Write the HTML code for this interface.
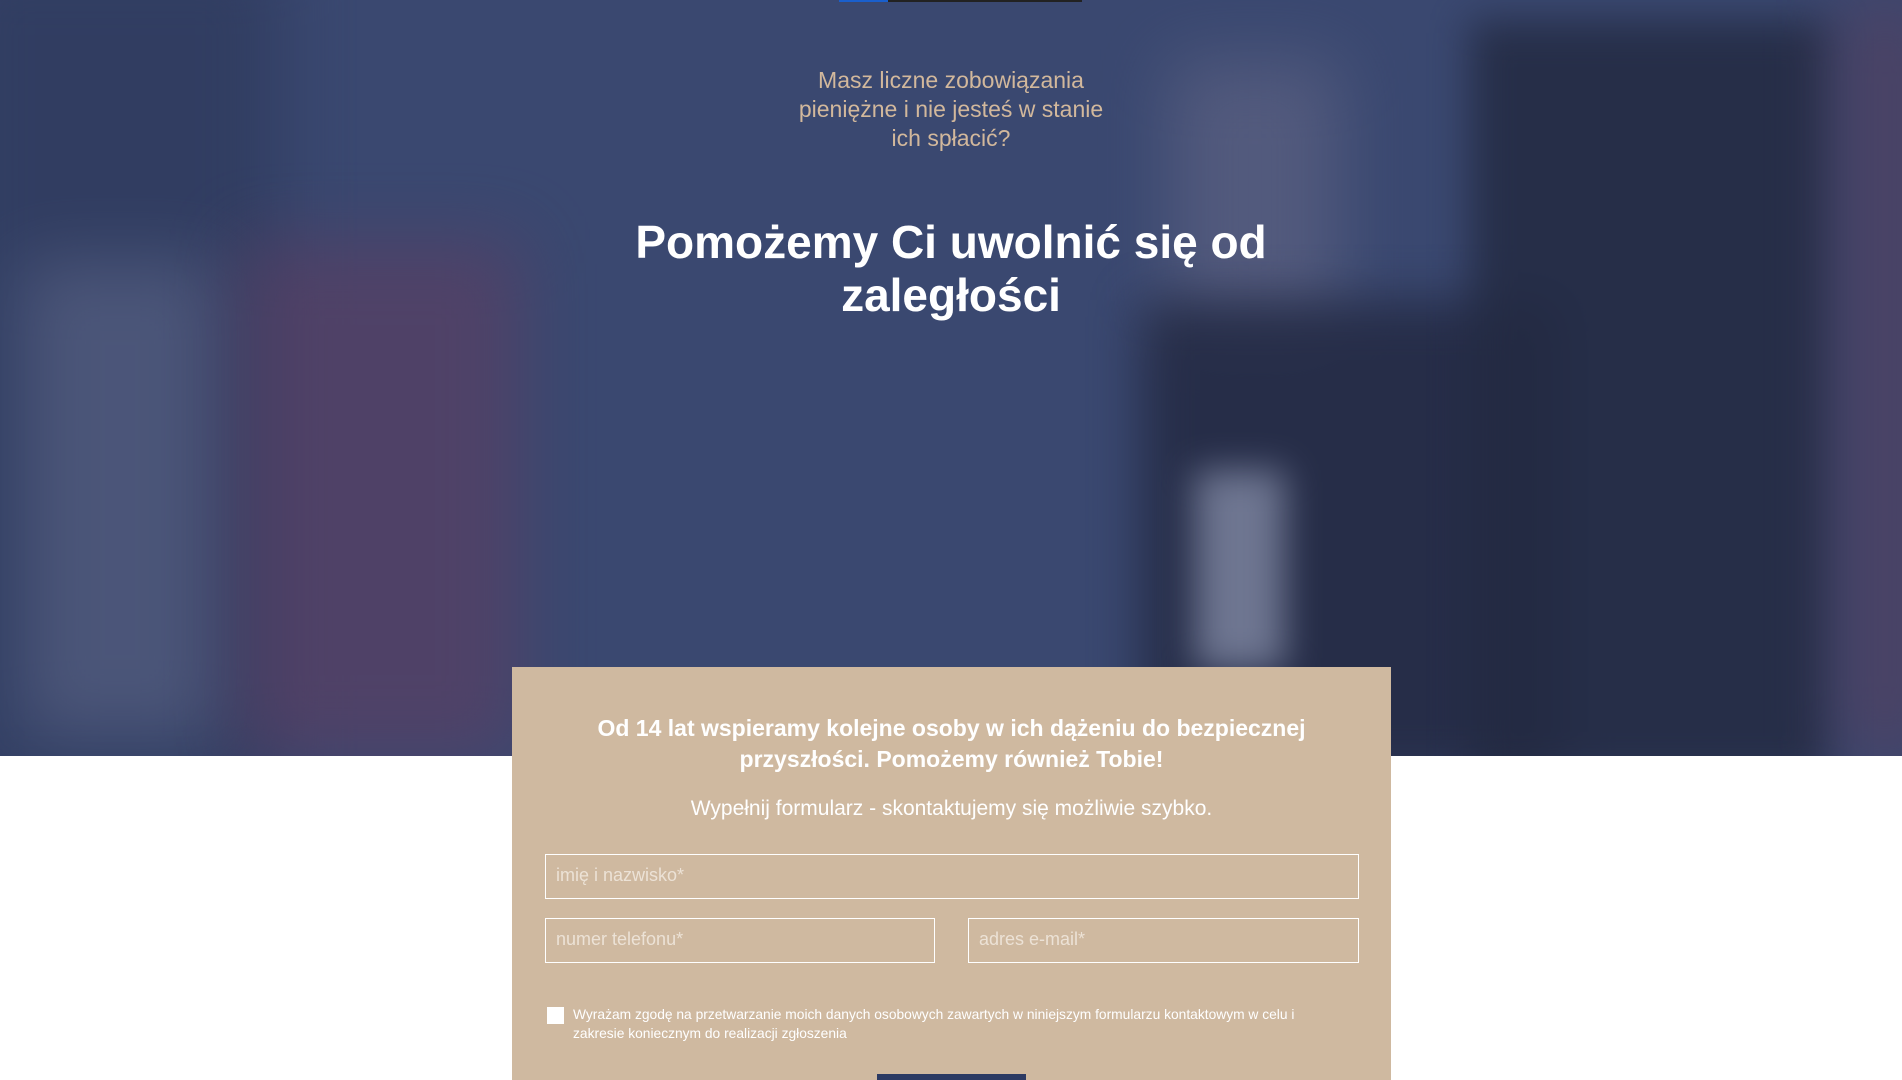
<!DOCTYPE html>
<html><head><meta charset="utf-8"><style>
*{margin:0;padding:0;box-sizing:border-box}
html,body{width:1902px;height:1080px;overflow:hidden}
body{background:#fff;font-family:"Liberation Sans",sans-serif;position:relative}
.hero{position:absolute;left:0;top:0;width:1902px;height:756px;background:#3a4870;overflow:hidden}
.b{position:absolute;filter:blur(35px)}
.bar1{position:absolute;top:0;left:839px;width:49px;height:2px;background:#1a5fcc}
.bar2{position:absolute;top:0;left:888px;width:194px;height:2px;background:#222}
.sub{position:absolute;top:66px;left:0;width:1902px;text-align:center;color:#d2b89c;font-size:23px;line-height:29px}
.h1{position:absolute;top:216px;left:0;width:1902px;text-align:center;color:#fff;font-size:46px;font-weight:bold;line-height:53px}
.form{position:absolute;left:512px;top:667px;width:879px;height:413px;background:#cfb9a0}
.fh{position:absolute;top:46px;left:0;width:879px;text-align:center;color:#fff;font-weight:bold;font-size:23px;line-height:31px}
.fs{position:absolute;top:130px;left:0;width:879px;text-align:center;color:#fff;font-size:21px}
.in{position:absolute;border:1.5px solid #fff;height:45px;color:#ece2d6;font-size:18px;padding:10px 10px}
.cb{position:absolute;left:35px;top:340px;width:17px;height:17px;background:#fff}
.ct{position:absolute;left:61px;top:338px;width:775px;color:#fff;font-size:13.8px;line-height:19px}
.btn{position:absolute;left:365px;top:407px;width:149px;height:10px;background:#2c3a63}
</style></head><body>
<div class="hero">
 <div class="b" style="left:-50px;top:-50px;width:330px;height:850px;background:#2f3b5e;opacity:.8"></div>
 <div class="b" style="left:20px;top:260px;width:200px;height:480px;background:#6b7496;opacity:.45"></div>
 <div class="b" style="left:240px;top:240px;width:280px;height:520px;background:#5e3e62;opacity:.6"></div>
 <div class="b" style="left:1170px;top:60px;width:170px;height:280px;background:#5d6283;opacity:.7"></div>
 <div class="b" style="left:1140px;top:300px;width:420px;height:480px;background:#232942;opacity:.85;filter:blur(25px)"></div>
 <div class="b" style="left:1195px;top:470px;width:90px;height:200px;background:#8d95b0;opacity:.7;filter:blur(18px)"></div>
 <div class="b" style="left:1470px;top:20px;width:360px;height:760px;background:#232a42;opacity:.85;filter:blur(20px)"></div>
 <div class="b" style="left:1840px;top:0;width:90px;height:760px;background:#5e3c58;opacity:.5"></div>
 <div class="bar1"></div><div class="bar2"></div>
 <div class="sub">Masz liczne zobowiązania<br>pieniężne i nie jesteś w stanie<br>ich spłacić?</div>
 <div class="h1">Pomożemy Ci uwolnić się od<br>zaległości</div>
</div>
<div class="form">
 <div class="fh">Od 14 lat wspieramy kolejne osoby w ich dążeniu do bezpiecznej<br>przyszłości. Pomożemy również Tobie!</div>
 <div class="fs">Wypełnij formularz - skontaktujemy się możliwie szybko.</div>
 <div class="in" style="left:33px;top:187px;width:814px">imię i nazwisko*</div>
 <div class="in" style="left:33px;top:251px;width:390px">numer telefonu*</div>
 <div class="in" style="left:456px;top:251px;width:391px">adres e-mail*</div>
 <div class="cb"></div>
 <div class="ct">Wyrażam zgodę na przetwarzanie moich danych osobowych zawartych w niniejszym formularzu kontaktowym w celu i<br>zakresie koniecznym do realizacji zgłoszenia</div>
 <div class="btn"></div>
</div>
</body></html>
